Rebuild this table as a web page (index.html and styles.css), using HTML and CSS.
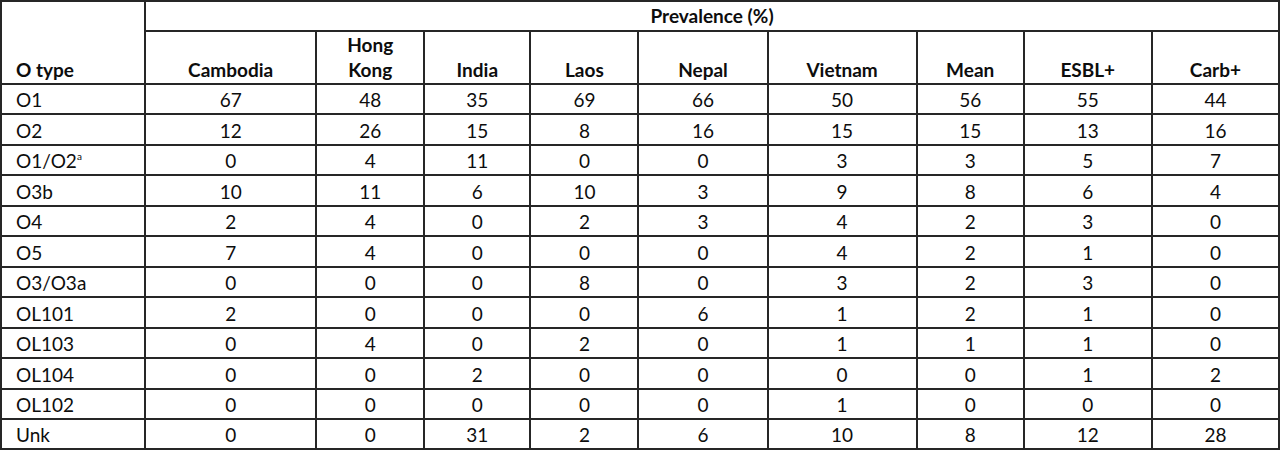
FILE: index.html
```html
<!DOCTYPE html>
<html lang="en">
<head>
<meta charset="utf-8">
<title>O type prevalence</title>
<link rel="stylesheet" href="styles.css">
</head>
<body>
<table class="prev">
  <colgroup>
    <col class="c-type">
    <col class="c-cam">
    <col class="c-hk">
    <col class="c-ind">
    <col class="c-lao">
    <col class="c-nep">
    <col class="c-vie">
    <col class="c-mean">
    <col class="c-esbl">
    <col class="c-carb">
  </colgroup>
  <thead>
    <tr class="h1">
      <th class="otype" rowspan="2">O type</th>
      <th class="span" colspan="9">Prevalence (%)</th>
    </tr>
    <tr class="h2">
      <th>Cambodia</th>
      <th>Hong<br>Kong</th>
      <th>India</th>
      <th>Laos</th>
      <th>Nepal</th>
      <th>Vietnam</th>
      <th>Mean</th>
      <th>ESBL+</th>
      <th>Carb+</th>
    </tr>
  </thead>
  <tbody>
    <tr><td class="label">O1</td><td>67</td><td>48</td><td>35</td><td>69</td><td>66</td><td>50</td><td>56</td><td>55</td><td>44</td></tr>
    <tr><td class="label">O2</td><td>12</td><td>26</td><td>15</td><td>8</td><td>16</td><td>15</td><td>15</td><td>13</td><td>16</td></tr>
    <tr><td class="label">O1/O2<sup>a</sup></td><td>0</td><td>4</td><td>11</td><td>0</td><td>0</td><td>3</td><td>3</td><td>5</td><td>7</td></tr>
    <tr><td class="label">O3b</td><td>10</td><td>11</td><td>6</td><td>10</td><td>3</td><td>9</td><td>8</td><td>6</td><td>4</td></tr>
    <tr><td class="label">O4</td><td>2</td><td>4</td><td>0</td><td>2</td><td>3</td><td>4</td><td>2</td><td>3</td><td>0</td></tr>
    <tr><td class="label">O5</td><td>7</td><td>4</td><td>0</td><td>0</td><td>0</td><td>4</td><td>2</td><td>1</td><td>0</td></tr>
    <tr><td class="label">O3/O3a</td><td>0</td><td>0</td><td>0</td><td>8</td><td>0</td><td>3</td><td>2</td><td>3</td><td>0</td></tr>
    <tr><td class="label">OL101</td><td>2</td><td>0</td><td>0</td><td>0</td><td>6</td><td>1</td><td>2</td><td>1</td><td>0</td></tr>
    <tr><td class="label">OL103</td><td>0</td><td>4</td><td>0</td><td>2</td><td>0</td><td>1</td><td>1</td><td>1</td><td>0</td></tr>
    <tr><td class="label">OL104</td><td>0</td><td>0</td><td>2</td><td>0</td><td>0</td><td>0</td><td>0</td><td>1</td><td>2</td></tr>
    <tr><td class="label">OL102</td><td>0</td><td>0</td><td>0</td><td>0</td><td>0</td><td>1</td><td>0</td><td>0</td><td>0</td></tr>
    <tr><td class="label">Unk</td><td>0</td><td>0</td><td>31</td><td>2</td><td>6</td><td>10</td><td>8</td><td>12</td><td>28</td></tr>
  </tbody>
</table>
</body>
</html>
```

FILE: styles.css
```css
html, body {
  margin: 0;
  padding: 0;
  background: #ffffff;
}

.prev {
  border-collapse: collapse;
  table-layout: fixed;
  width: 1280px;
  font-family: Lato, "Liberation Sans", sans-serif;
  font-size: 19px;
  color: #0d0d0d;
}

.c-type { width: 144px; }
.c-cam  { width: 171px; }
.c-hk   { width: 108px; }
.c-ind  { width: 106px; }
.c-lao  { width: 108px; }
.c-nep  { width: 129px; }
.c-vie  { width: 149px; }
.c-mean { width: 107px; }
.c-esbl { width: 128px; }
.c-carb { width: 127px; }

.prev th,
.prev td {
  border: 2px solid #262626;
  padding: 0 4px 2px;
  line-height: 23px;
  vertical-align: bottom;
  text-align: center;
  box-sizing: border-box;
}

.prev th {
  font-weight: bold;
}

.prev .otype,
.prev .label {
  text-align: left;
  padding-left: 14px;
}

.h1 th {
  height: 30px;
}

.h1 .span {
  vertical-align: middle;
}

.h2 th {
  height: 52px;
  line-height: 25px;
  padding-bottom: 1px;
}

.prev tbody td {
  height: 30.46px;
}

.prev sup {
  font-size: 10px;
  line-height: 0;
  vertical-align: 8px;
}
```
